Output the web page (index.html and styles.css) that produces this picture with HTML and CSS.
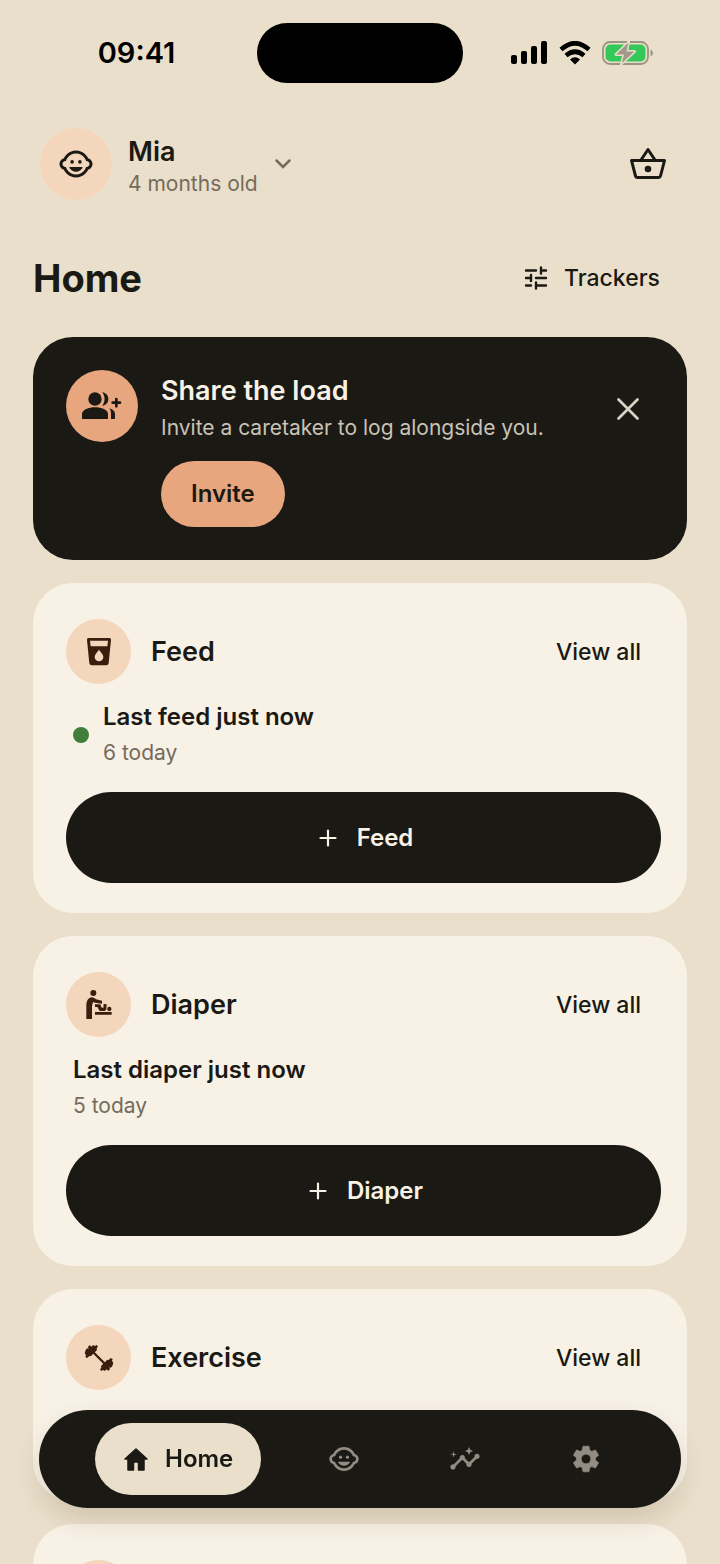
FILE: index.html
```html
<!DOCTYPE html>
<html lang="en">
<head>
    <meta charset="UTF-8">
    <meta name="viewport" content="width=device-width, initial-scale=1.0">
    <title>Home</title>
    <link rel="stylesheet" href="styles.css">
</head>
<body>
    <svg class="sprite" aria-hidden="true">
        <symbol id="icon-baby" viewBox="0 0 24 24">
            <path d="M22.94 12.66c.04-.21.06-.43.06-.66s-.02-.45-.06-.66c-.25-1.51-1.36-2.74-2.81-3.17-.53-1.12-1.28-2.1-2.19-2.91C16.36 3.85 14.28 3 12 3s-4.36.85-5.94 2.26c-.92.81-1.67 1.8-2.19 2.91-1.45.43-2.56 1.65-2.81 3.17-.04.21-.06.43-.06.66s.02.45.06.66c.25 1.51 1.36 2.74 2.81 3.17.52 1.11 1.27 2.09 2.17 2.89C7.62 20.14 9.71 21 12 21s4.38-.86 5.97-2.28c.9-.8 1.65-1.79 2.17-2.89 1.44-.43 2.55-1.65 2.8-3.17zM19 14c-.1 0-.19-.02-.29-.03-.2.67-.49 1.29-.86 1.86C16.6 17.74 14.45 19 12 19s-4.6-1.26-5.85-3.17c-.37-.57-.66-1.19-.86-1.86-.1.01-.19.03-.29.03-1.1 0-2-.9-2-2s.9-2 2-2c.1 0 .19.02.29.03.2-.67.49-1.29.86-1.86C7.4 6.26 9.55 5 12 5s4.6 1.26 5.85 3.17c.37.57.66 1.19.86 1.86.1-.01.19-.03.29-.03 1.1 0 2 .9 2 2s-.9 2-2 2z"/>
            <circle cx="9.4" cy="10.6" r="1.2"/>
            <circle cx="14.6" cy="10.6" r="1.2"/>
            <path d="M8 14h8q.6 0 .4.5c-.8 1.600-2.500 2.600-4.400 2.600s-3.600-1-4.400-2.600q-.2-.5.4-.5z"/>
        </symbol>
        <symbol id="icon-plus" viewBox="0 0 18 18">
            <path d="M9 1.500v15M1.500 9h15" fill="none" stroke="currentColor" stroke-width="2.200" stroke-linecap="round"/>
        </symbol>
    </svg>

    <div class="status-bar">
        <time class="clock">09:41</time>
        <div class="island"></div>
        <div class="status-icons">
            <svg width="37" height="24" viewBox="0 0 37 24" aria-hidden="true">
                <rect x="0" y="14" width="6" height="9" rx="2"/>
                <rect x="10" y="10" width="6" height="13" rx="2"/>
                <rect x="20" y="5" width="6" height="18" rx="2"/>
                <rect x="30" y="0" width="6" height="23" rx="2"/>
            </svg>
            <svg width="32" height="24" viewBox="0 0 32 24" aria-hidden="true">
                <path d="M2 8.500Q16-4 30 8.500M7 14.500Q16 7 25 14.500" fill="none" stroke="#000" stroke-width="4.600"/>
                <path d="M11 18.500Q16 14 21 18.500L16 23.500z"/>
            </svg>
            <svg width="52" height="26" viewBox="0 0 52 26" aria-hidden="true">
                <rect x="1" y="2" width="45" height="22" rx="7" fill="none" stroke="#9c9483" stroke-width="1.800"/>
                <rect x="3.500" y="4.500" width="40" height="17" rx="5" fill="#34c759"/>
                <path d="M48.500 9.500q2.500 1 2.500 3.500t-2.500 3.500z" fill="#9c9483"/>
                <path d="M27.500.500 13.500 14q-.8 1.200.8 1.200H21L18.500 25.500 33 12q.8-1.300-.8-1.300H25.500z" fill="#a3998a" stroke="#ebdfca" stroke-width="1.500"/>
            </svg>
        </div>
    </div>

    <header class="profile">
        <button class="profile-switch" type="button">
            <span class="avatar"><svg width="36" height="36" aria-hidden="true"><use href="#icon-baby"/></svg></span>
            <span class="profile-text">
                <span class="profile-name">Mia</span>
                <span class="muted">4 months old</span>
            </span>
            <svg class="chevron" width="18" height="12" viewBox="0 0 18 12" aria-hidden="true">
                <path d="M2.500 2.500 9 9l6.500-6.500" fill="none" stroke="currentColor" stroke-width="2.500" stroke-linecap="round"/>
            </svg>
        </button>
        <button class="icon-button" type="button" aria-label="Shop">
            <svg width="38" height="34" viewBox="0 0 38 34" aria-hidden="true">
                <g fill="none" stroke="currentColor" stroke-width="3" stroke-linejoin="round">
                    <path d="M2.500 13.500h33L31.500 29q-.4 1.500-2 1.500h-21q-1.600 0-2-1.500z"/>
                    <path d="M12 13 19 2.500 26 13"/>
                </g>
                <circle cx="19" cy="22" r="3.300"/>
            </svg>
        </button>
    </header>

    <main>
        <div class="page-head">
            <h1>Home</h1>
            <button class="trackers" type="button">
                <svg width="24" height="24" viewBox="0 0 24 24" aria-hidden="true">
                    <path d="M2 4.500h10M17 1.500v6M17 4.500h5M2 12h5M7 9v6M12 12h10M2 19.500h5M12 16.500v6M12 19.500h10" fill="none" stroke="currentColor" stroke-width="2.400" stroke-linecap="round"/>
                </svg>
                Trackers
            </button>
        </div>

        <section class="invite">
            <span class="invite-icon">
                <svg width="40" height="28" viewBox="0 0 120 84" aria-hidden="true">
                    <circle cx="39" cy="21" r="20"/>
                    <path d="M0 81V66C0 54 20 46 39 46s39 8 39 20v15z"/>
                    <path d="M61 1c11 1 18 10 18 20s-7 19-18 20c9-13 9-27 0-40zM82 49c11 3 17 9 17 17v15H87V66c0-7-1-12-5-17z"/>
                    <path d="M103 21v22M92 32h22" stroke="currentColor" stroke-width="8" stroke-linecap="round"/>
                </svg>
            </span>
            <div class="invite-body">
                <h2>Share the load</h2>
                <p>Invite a caretaker to log alongside you.</p>
                <button class="invite-button" type="button">Invite</button>
            </div>
            <button class="close" type="button" aria-label="Dismiss">
                <svg width="24" height="24" viewBox="0 0 24 24" aria-hidden="true">
                    <path d="M2.500 2.500l19 19M21.500 2.500l-19 19" fill="none" stroke="currentColor" stroke-width="2.700" stroke-linecap="round"/>
                </svg>
            </button>
        </section>

        <section class="card">
            <div class="card-head">
                <span class="card-icon">
                    <svg width="32" height="32" viewBox="0 0 96 96" aria-hidden="true">
                        <path fill-rule="evenodd" d="M17 6h62q6 0 5 6l-7 70q-1 6-7 6H26q-6 0-7-6L12 12q-1-6 5-6zM21 14l2 17h50l2-17zM48 41C42 49 35 56 35 63a13 13 0 0 0 26 0c0-7-7-14-13-22z"/>
                    </svg>
                </span>
                <h2>Feed</h2>
                <a class="view-all" href="#feed">View all</a>
            </div>
            <div class="status">
                <span class="dot"></span>
                <div>
                    <p class="status-title">Last feed just now</p>
                    <p class="muted">6 today</p>
                </div>
            </div>
            <button class="log-button" type="button"><svg width="18" height="18" aria-hidden="true"><use href="#icon-plus"/></svg>Feed</button>
        </section>

        <section class="card">
            <div class="card-head">
                <span class="card-icon">
                    <svg width="32" height="32" viewBox="0 0 96 96" aria-hidden="true">
                        <circle cx="31" cy="12" r="9"/>
                        <path d="M10 90V50C10 33 18 25 27 25c5 0 8 3 12 6l18 4v9l-21-3-6-2-3 12v39z"/>
                        <path d="M36 69h50v8H36zM36 46h16l3 9 6 2 1-12 9 1-1 15-4 5H50l-7-12h-7z"/>
                        <circle cx="79" cy="60" r="6.500"/>
                    </svg>
                </span>
                <h2>Diaper</h2>
                <a class="view-all" href="#diaper">View all</a>
            </div>
            <div class="status">
                <div>
                    <p class="status-title">Last diaper just now</p>
                    <p class="muted">5 today</p>
                </div>
            </div>
            <button class="log-button" type="button"><svg width="18" height="18" aria-hidden="true"><use href="#icon-plus"/></svg>Diaper</button>
        </section>

        <section class="card card-short">
            <div class="card-head">
                <span class="card-icon">
                    <svg width="32" height="32" viewBox="0 0 96 96" aria-hidden="true">
                        <path d="M30 30l36 36" stroke="currentColor" stroke-width="7"/>
                        <path d="M8 24l4-5 5 1-2-6 5-4 6 4 4-5 6 3 5-3 4 5-4 5 1 5-9 9-9 9-6 1-5 5-6-3 2-6-4-5zM88 72l-4 5-5-1 2 6-5 4-6-4-4 5-6-3-5 3-4-5 4-5-1-5 9-9 9-9 6-1 5-5 6 3-2 6 4 5z"/>
                    </svg>
                </span>
                <h2>Exercise</h2>
                <a class="view-all" href="#exercise">View all</a>
            </div>
        </section>

        <section class="card">
            <div class="card-head">
                <span class="card-icon"></span>
            </div>
        </section>
    </main>

    <nav class="tab-bar">
        <a class="tab tab-active" href="#home">
            <svg width="26" height="26" viewBox="0 0 26 26" aria-hidden="true">
                <path d="M13 3 2 13h3v11h5.500v-8h5v8H21V13h3z" stroke="currentColor" stroke-width="1.500" stroke-linejoin="round"/>
            </svg>
            Home
        </a>
        <a class="tab" href="#child" aria-label="Child">
            <svg width="32" height="32" aria-hidden="true"><use href="#icon-baby"/></svg>
        </a>
        <a class="tab" href="#insights" aria-label="Insights">
            <svg width="32" height="32" viewBox="0 0 24 24" aria-hidden="true">
                <path d="M21 8c-1.450 0-2.260 1.440-1.930 2.510l-3.550 3.560c-.3-.09-.74-.09-1.040 0l-2.550-2.550C12.270 10.450 11.460 9 10 9c-1.450 0-2.270 1.440-1.930 2.520l-4.560 4.550C2.440 15.740 1 16.550 1 18c0 1.100.9 2 2 2 1.450 0 2.260-1.440 1.930-2.510l4.550-4.560c.3.09.74.09 1.040 0l2.550 2.550C12.730 16.550 13.540 18 15 18c1.450 0 2.270-1.440 1.930-2.520l3.560-3.550C21.560 12.260 23 11.450 23 10c0-1.100-.9-2-2-2z"/>
                <path d="M15 9l.94-2.070L18 6l-2.060-.93L15 3l-.92 2.070L12 6l2.080.93zM3.500 11L4 9l2-.5L4 8l-.5-2L3 8l-2 .5L3 9z"/>
            </svg>
        </a>
        <a class="tab" href="#settings" aria-label="Settings">
            <svg width="32" height="32" viewBox="0 0 24 24" aria-hidden="true">
                <path d="M19.140 12.940c.04-.3.06-.61.06-.94 0-.32-.02-.64-.07-.94l2.030-1.580c.18-.14.23-.41.12-.61l-1.920-3.320c-.12-.22-.37-.29-.59-.22l-2.390.96c-.5-.38-1.030-.7-1.620-.94l-.36-2.540c-.04-.24-.24-.41-.48-.41h-3.840c-.24 0-.43.17-.47.41l-.36 2.540c-.59.24-1.130.57-1.620.94l-2.390-.96c-.22-.08-.47 0-.59.22L2.740 8.870c-.12.21-.08.47.12.61l2.030 1.580c-.05.3-.09.63-.09.94s.02.64.07.94l-2.030 1.580c-.18.14-.23.41-.12.61l1.920 3.320c.12.22.37.29.59.22l2.390-.96c.5.38 1.030.7 1.620.94l.36 2.540c.05.24.24.41.48.41h3.840c.24 0 .44-.17.47-.41l.36-2.540c.59-.24 1.130-.56 1.620-.94l2.390.96c.22.08.47 0 .59-.22l1.920-3.320c.12-.22.07-.47-.12-.61l-2.010-1.580zM12 15.600a3.600 3.600 0 1 1 0-7.200 3.600 3.600 0 0 1 0 7.200z" stroke="currentColor" stroke-width=".5"/>
            </svg>
        </a>
    </nav>
</body>
</html>
```
FILE: styles.css
```css
* {
    box-sizing: border-box;
}
body {
    display: flex;
    flex-direction: column;
    height: 100vh;
    margin: 0;
    background-color: #eadfca;
    color: #1a1914;
    font-family: Inter, "Liberation Sans", sans-serif;
    font-size: 23px;
    line-height: 32px;
}
h1, h2, p {
    margin: 0;
}
button {
    padding: 0;
    border: none;
    background: none;
    color: inherit;
    font: inherit;
    cursor: pointer;
}
a {
    color: inherit;
    text-decoration: none;
}
svg {
    display: block;
    fill: currentColor;
    flex-shrink: 0;
}
.sprite {
    position: absolute;
    width: 0;
    height: 0;
}
.muted {
    color: #756b5c;
    font-size: 21px;
}
.status-bar {
    display: grid;
    grid-template-columns: 1fr 206px 1fr;
    align-items: center;
    padding: 23px 0;
    color: #000;
}
.clock {
    justify-self: center;
    padding-left: 16px;
    font-size: 29px;
    font-weight: 600;
}
.island {
    height: 60px;
    border-radius: 30px;
    background-color: #000;
}
.status-icons {
    display: flex;
    align-items: center;
    gap: 11px;
    padding-left: 48px;
}
.profile {
    display: flex;
    justify-content: space-between;
    align-items: center;
    padding: 22px 53px 0 40px;
}
.profile-switch {
    display: flex;
    align-items: center;
    text-align: left;
}
.avatar,
.invite-icon,
.card-icon {
    display: flex;
    align-items: center;
    justify-content: center;
    flex-shrink: 0;
    border-radius: 50%;
    background-color: #f4d6bd;
}
.avatar {
    width: 72px;
    height: 72px;
}
.profile-text {
    display: flex;
    flex-direction: column;
    padding: 7px 16px 0 16px;
}
.profile-name {
    font-size: 27px;
    font-weight: 600;
}
.chevron {
    color: #756b5c;
}
main {
    flex: 1;
    min-height: 0;
    padding: 0 33px;
    overflow-y: auto;
    scrollbar-width: none;
}
.page-head {
    display: flex;
    justify-content: space-between;
    align-items: center;
    height: 137px;
    padding: 19px 27px 0 0;
}
h1 {
    font-size: 38px;
    line-height: 44px;
    font-weight: 700;
}
h2 {
    font-size: 27px;
    line-height: 36px;
    font-weight: 600;
}
.trackers {
    display: flex;
    align-items: center;
    gap: 16px;
    font-weight: 500;
}
.invite {
    display: flex;
    align-items: flex-start;
    padding: 33px;
    border-radius: 40px;
    background-color: #1a1914;
    color: #f8f1e5;
}
.invite-icon {
    width: 72px;
    height: 72px;
    background-color: #e8a67e;
    color: #1a1914;
}
.invite-body {
    flex: 1;
    padding-left: 23px;
}
.invite-body h2 {
    line-height: 42px;
}
.invite-body p {
    color: #c9c2b5;
    font-size: 21px;
}
.invite-button {
    height: 66px;
    margin-top: 17px;
    padding: 0 30px;
    border-radius: 33px;
    background-color: #e8a67e;
    color: #1a1914;
    font-size: 24px;
    font-weight: 600;
}
.close {
    padding: 27px 14px;
    color: #d9d2c6;
}
.card {
    margin-top: 23px;
    padding: 36px 26px 30px 33px;
    border-radius: 40px;
    background-color: #f8f1e5;
}
.card-short {
    padding-bottom: 111px;
}
.card-head {
    display: flex;
    align-items: center;
    gap: 20px;
}
.card-icon {
    width: 65px;
    height: 65px;
    color: #3b1d0d;
}
.view-all {
    margin-left: auto;
    padding-right: 20px;
    font-weight: 500;
}
.status {
    display: flex;
    align-items: center;
    gap: 14px;
    padding: 15px 7px 21px;
}
.status-title,
.status .muted {
    line-height: 36px;
}
.status-title {
    font-size: 24px;
    font-weight: 600;
}
.dot {
    width: 16px;
    height: 16px;
    border-radius: 50%;
    background-color: #3f7f3b;
}
.log-button {
    display: flex;
    align-items: center;
    justify-content: center;
    gap: 20px;
    width: 100%;
    height: 91px;
    padding-left: 5px;
    border-radius: 46px;
    background-color: #1a1914;
    color: #f8f1e5;
    font-size: 24px;
    font-weight: 600;
}
.tab-bar {
    position: fixed;
    right: 39px;
    bottom: 56px;
    left: 39px;
    display: flex;
    align-items: center;
    justify-content: space-between;
    height: 98px;
    padding: 0 56px;
    border-radius: 49px;
    background-color: #1a1914;
    color: #928c82;
    box-shadow: 0 12px 26px rgba(60, 40, 20, 0.14);
}
.tab {
    display: flex;
    align-items: center;
    justify-content: center;
    gap: 16px;
    width: 78px;
    height: 72px;
}
.tab-active {
    width: auto;
    padding: 0 28px;
    border-radius: 36px;
    background-color: #eadfca;
    color: #1a1914;
    font-size: 24px;
    font-weight: 600;
}
```
